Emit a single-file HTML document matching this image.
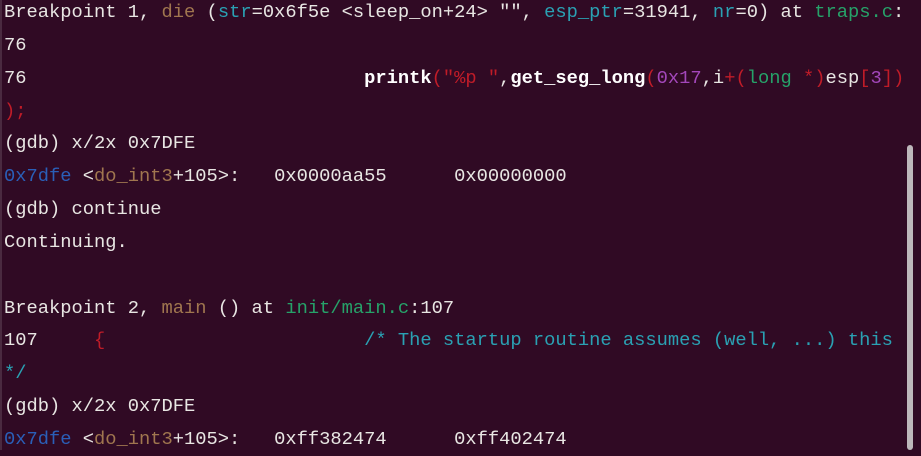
<!DOCTYPE html>
<html><head><meta charset="utf-8"><style>
html,body{margin:0;padding:0;background:#300a24;width:921px;height:450px;overflow:hidden}
pre{position:absolute;left:4px;top:-4px;margin:0;font-family:"Liberation Mono",monospace;font-size:18.75px;line-height:32.85px;color:#e8e6e3}
.br{color:#a0764f}.cy{color:#2aa1b3}.gr{color:#26a269}.rd{color:#c01c28}.pu{color:#a347ba}.bl{color:#2a5fb8}.b{font-weight:bold;color:#fff}
.sb{position:absolute;left:907px;top:145px;width:6px;height:305px;background:#bdb8bb;border-radius:3px}
.lb{position:absolute;left:0;top:0;width:2px;height:450px;background:#4a2a40}
</style></head><body>
<div class="lb"></div>
<pre>Breakpoint 1, <span class="br">die</span> (<span class="cy">str</span>=0x6f5e &lt;sleep_on+24&gt; "", <span class="cy">esp_ptr</span>=31941, <span class="cy">nr</span>=0) at <span class="gr">traps.c</span>:
76
76                              <span class="b">printk</span><span class="rd">("%p "</span>,<span class="b">get_seg_long</span><span class="rd">(</span><span class="pu">0x17</span>,i<span class="rd">+(</span><span class="gr">long</span> <span class="rd">*)</span>esp<span class="rd">[</span><span class="pu">3</span><span class="rd">])</span>
<span class="rd">);</span>
(gdb) x/2x 0x7DFE
<span class="bl">0x7dfe</span> &lt;<span class="br">do_int3</span>+105&gt;:   0x0000aa55      0x00000000
(gdb) continue
Continuing.

Breakpoint 2, <span class="br">main</span> () at <span class="gr">init/main.c</span>:107
107     <span class="rd">{</span>                       <span class="cy">/* The startup routine assumes (well, ...) this</span>
<span class="cy">*/</span>
(gdb) x/2x 0x7DFE
<span class="bl">0x7dfe</span> &lt;<span class="br">do_int3</span>+105&gt;:   0xff382474      0xff402474</pre>
<div class="sb"></div>
</body></html>
